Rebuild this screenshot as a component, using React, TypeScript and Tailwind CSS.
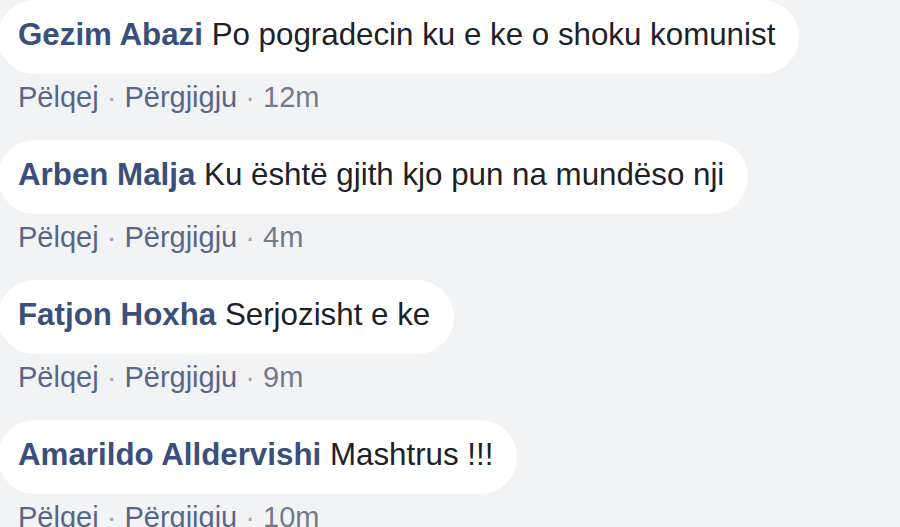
import React from "react";

const comments = [
  { name: "Gezim Abazi", text: "Po pogradecin ku e ke o shoku komunist", time: "12m" },
  { name: "Arben Malja", text: "Ku është gjith kjo pun na mundëso nji", time: "4m" },
  { name: "Fatjon Hoxha", text: "Serjozisht e ke", time: "9m" },
  { name: "Amarildo Alldervishi", text: "Mashtrus !!!", time: "10m" },
];

export default function App() {
  return (
    <div
      className="h-[527px] w-[900px] overflow-hidden bg-[#f2f3f5]"
      style={{ fontFamily: '"Liberation Sans", Arial, sans-serif' }}
    >
      {comments.map((c) => (
        <Comment key={c.name} {...c} />
      ))}
    </div>
  );
}

function Comment({ name, text, time }: { name: string; text: string; time: string }) {
  return (
    <div className="mb-[23px]">
      <div className="-ml-[2px] inline-block h-[74px] rounded-[37px] bg-white pl-[20px] pr-[24px] pt-[17px] text-[31.3px] leading-[35px] whitespace-nowrap">
        <span className="font-bold text-[#3a4f7c]">{name}</span>{" "}
        <span className="text-[#1d2129]">{text}</span>
      </div>
      <div className="mt-[3px] pl-[18px] text-[29px] leading-[40px] text-[#5a6687] whitespace-nowrap">
        <span>Pëlqej</span>
        <span className="text-[#a0a4ac]"> · </span>
        <span>Përgjigju</span>
        <span className="text-[#a0a4ac]"> · </span>
        <span className="text-[#737a8c]">{time}</span>
      </div>
    </div>
  );
}
